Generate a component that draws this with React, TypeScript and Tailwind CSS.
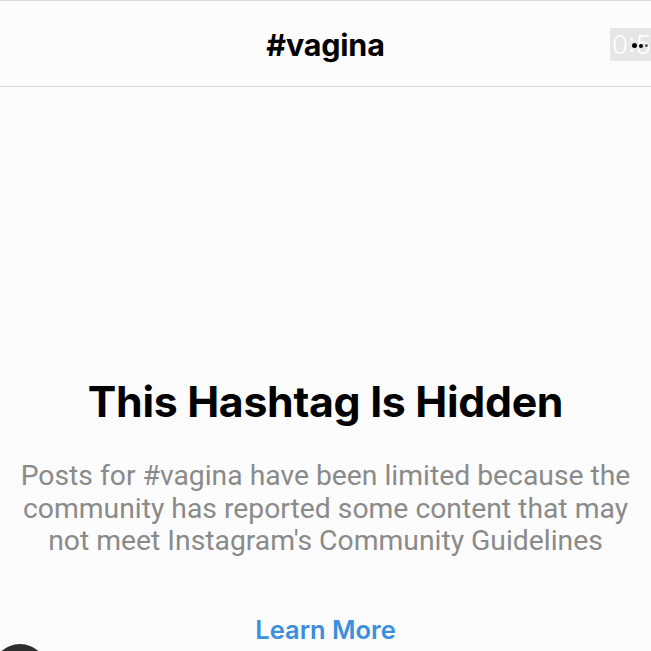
export default function App() {
  return (
    <div className="relative w-[651px] h-[651px] overflow-hidden bg-[#fcfcfc] font-['Inter','Roboto',sans-serif]">
      {/* Header */}
      <header className="relative h-[87px] border-t border-b border-[#d8d8d8] flex items-center justify-center">
        <h1 className="text-[30.5px] font-bold text-black tracking-[-0.2px] mt-[3px]">#vagina</h1>
        {/* video timestamp overlay */}
        <div className="absolute right-0 top-[27px] w-[41px] h-[33px] bg-[#e6e6e6] flex items-center overflow-hidden">
          <span className="text-[26px] font-light text-white leading-none pl-[2px]">0:5</span>
        </div>
        <div className="absolute right-[3px] top-[42px] flex items-center gap-[2px]">
          <span className="w-[5px] h-[5px] rounded-full bg-black" />
          <span className="w-[4px] h-[4px] rounded-full bg-black" />
          <span className="w-[3px] h-[3px] rounded-full bg-black/60" />
        </div>
      </header>

      {/* Hidden message */}
      <main className="flex flex-col items-center text-center pt-[290px]">
        <h2 className="text-[42.8px] font-bold text-black leading-[50px] tracking-[-0.3px]">This Hashtag Is Hidden</h2>
        <p className="mt-[33px] text-[28.3px] text-[#8a8a8a] leading-[32.5px] font-['Roboto',sans-serif]">
          Posts for #vagina have been limited because the
          <br />
          community has reported some content that may
          <br />
          not meet Instagram's Community Guidelines
        </p>
        <a className="mt-[57px] text-[25.5px] leading-[30px] font-semibold text-[#3b8fdc]">Learn More</a>
      </main>

      {/* floating circle */}
      <div className="absolute left-[-8px] top-[644px] w-[56px] h-[56px] rounded-full bg-[#2e2e2e]" />
    </div>
  )
}
